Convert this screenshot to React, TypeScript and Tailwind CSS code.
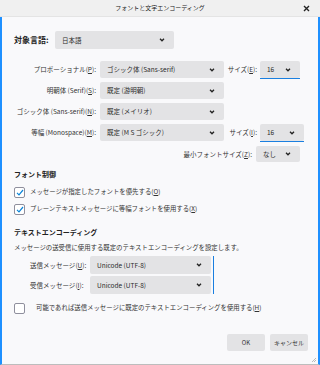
import React from 'react'

const font = { fontFamily: '"Noto Sans CJK JP", "Noto Sans", sans-serif' }

function Chevron() {
  return (
    <svg width="6" height="4" viewBox="0 0 6 4" className="shrink-0">
      <path d="M1 0.8 L3 2.8 L5 0.8" fill="none" stroke="#222" strokeWidth="1.3" />
    </svg>
  )
}

function Select({ value, className }: { value: string; className: string }) {
  return (
    <div className={`flex items-center justify-between bg-[#e3e3e5] rounded-[2px] pl-[7px] pr-[9px] text-[6.5px] leading-none text-[#2b2b2b] shrink-0 ${className}`}>
      <span className="whitespace-nowrap">{value}</span>
      <Chevron />
    </div>
  )
}

function Label({ text, k, className }: { text: string; k: string; className?: string }) {
  return (
    <span className={`text-[6.5px] leading-none text-[#333] whitespace-nowrap shrink-0 ${className ?? ''}`}>
      {text}(<span className="underline">{k}</span>):
    </span>
  )
}

function Check({ checked, gap, children }: { checked: boolean; gap: string; children: React.ReactNode }) {
  return (
    <div className="flex items-center h-[11px] pl-[14px]">
      <div className="w-[11px] h-[11px] border border-[#8f8f9d] rounded-[2px] bg-white flex items-center justify-center shrink-0">
        {checked && (
          <svg width="8" height="7" viewBox="0 0 8 7">
            <path d="M1 3.8 L3 5.8 L7 1" fill="none" stroke="#0a84d8" strokeWidth="1.2" />
          </svg>
        )}
      </div>
      <span className={`text-[6.4px] leading-none text-[#333] whitespace-nowrap ${gap}`}>{children}</span>
    </div>
  )
}

export default function App() {
  return (
    <div style={font} className="w-[320px] h-[365px] flex flex-col bg-[#f9f9fb] overflow-hidden">
      <div className="h-[17px] bg-[#f0f0f0] flex items-center justify-center relative shrink-0 border-b border-[#e4e4e4]">
        <span className="text-[6px] leading-none text-[#222]">フォントと文字エンコーディング</span>
        <svg width="7" height="7" viewBox="0 0 7 7" className="absolute right-[10px] top-[5px]">
          <path d="M1 1 L6 6 M6 1 L1 6" stroke="#222" strokeWidth="1.4" />
        </svg>
      </div>
      <div className="flex-1 border-l-[2px] border-r-[2px] border-b border-l-[#1e90ff] border-r-[#1e90ff] border-b-[#bdbdbd] relative">
        <div className="flex items-center mt-[14px] h-[18px] pl-[12px]">
          <span className="text-[8px] leading-none font-bold text-[#222] w-[41px]">対象言語:</span>
          <Select value="日本語" className="w-[119px] h-[18px]" />
        </div>

        <div className="mt-[12px] flex flex-col gap-[4px]">
          <div className="flex items-center h-[17px]">
            <div className="w-[98px] flex justify-end pr-[4px] shrink-0"><Label text="プロポーショナル" k="P" /></div>
            <Select value="ゴシック体 (Sans-serif)" className="w-[124px] h-[17px]" />
            <div className="w-[36px] flex justify-end pr-[3px] shrink-0"><Label text="サイズ" k="E" /></div>
            <div className="relative">
              <Select value="16" className="w-[40px] h-[17px]" />
              <div className="absolute left-0 right-0 bottom-[-1px] h-[1px] bg-[#1a7fe0]" />
            </div>
          </div>
          <div className="flex items-center h-[17px]">
            <div className="w-[98px] flex justify-end pr-[4px] shrink-0"><Label text="明朝体 (Serif)" k="S" /></div>
            <Select value="既定 (游明朝)" className="w-[124px] h-[17px]" />
          </div>
          <div className="flex items-center h-[17px]">
            <div className="w-[98px] flex justify-end pr-[4px] shrink-0"><Label text="ゴシック体 (Sans-serif)" k="N" /></div>
            <Select value="既定 (メイリオ)" className="w-[124px] h-[17px]" />
          </div>
          <div className="flex items-center h-[17px]">
            <div className="w-[98px] flex justify-end pr-[4px] shrink-0"><Label text="等幅 (Monospace)" k="M" /></div>
            <Select value="既定 (M S ゴシック)" className="w-[124px] h-[17px]" />
            <div className="w-[36px] flex justify-end pr-[3px] shrink-0"><Label text="サイズ" k="I" /></div>
            <div className="relative">
              <Select value="16" className="w-[44px] h-[17px]" />
              <div className="absolute left-0 right-0 bottom-[-1px] h-[1px] bg-[#1a7fe0]" />
            </div>
          </div>
          <div className="flex items-center justify-end h-[16px] pr-[18px] mt-[1px]">
            <Label text="最小フォントサイズ" k="Z" className="mr-[4px]" />
            <Select value="なし" className="w-[44px] h-[16px]" />
          </div>
        </div>

        <div className="mt-[7px] pl-[12px] h-[10px] flex items-center text-[7px] leading-none font-bold text-[#222]">フォント制御</div>
        <div className="mt-[8px] flex flex-col gap-[6px] -ml-[2px]">
          <Check checked gap="ml-[5px]">
            メッセージが指定したフォントを優先する(<span className="underline">O</span>)
          </Check>
          <Check checked gap="ml-[5px]">
            プレーンテキストメッセージに等幅フォントを使用する(<span className="underline">X</span>)
          </Check>
        </div>

        <div className="mt-[12px] pl-[12px] h-[10px] flex items-center text-[7px] leading-none font-bold text-[#222]">テキストエンコーディング</div>
        <div className="mt-[7px] pl-[12px] h-[9px] flex items-center text-[6.4px] leading-none text-[#333] whitespace-nowrap">メッセージの送受信に使用する既定のテキストエンコーディングを設定します。</div>
        <div className="flex items-start mt-[3px] pl-[28px]">
          <div className="flex flex-col gap-[2px]">
            <div className="flex items-center h-[18px]">
              <Label text="送信メッセージ" k="U" className="w-[60px]" />
              <Select value="Unicode (UTF-8)" className="w-[121px] h-[18px]" />
            </div>
            <div className="flex items-center h-[18px]">
              <Label text="受信メッセージ" k="I" className="w-[60px]" />
              <Select value="Unicode (UTF-8)" className="w-[121px] h-[18px]" />
            </div>
          </div>
          <div className="ml-[2px] w-[1px] h-[38px] bg-[#1a7fe0]" />
        </div>

        <div className="mt-[9px] -ml-[2px]">
          <Check checked={false} gap="ml-[11px]">
            可能であれば送信メッセージに既定のテキストエンコーディングを使用する(<span className="underline">H</span>)
          </Check>
        </div>

        <div className="flex justify-end gap-[5px] mt-[20px] pr-[10px]">
          <div className="w-[38px] h-[17px] bg-[#e3e3e5] rounded-[2px] flex items-center justify-center text-[6px] leading-none text-[#333]">OK</div>
          <div className="w-[38px] h-[17px] bg-[#e3e3e5] rounded-[2px] flex items-center justify-center text-[6px] leading-none text-[#333]">キャンセル</div>
        </div>
        <svg width="6" height="6" viewBox="0 0 6 6" className="absolute right-[1px] bottom-[1px]">
          <path d="M5 1 L1 5 M5 3 L3 5" stroke="#aaa" strokeWidth="0.8" />
        </svg>
      </div>
    </div>
  )
}
